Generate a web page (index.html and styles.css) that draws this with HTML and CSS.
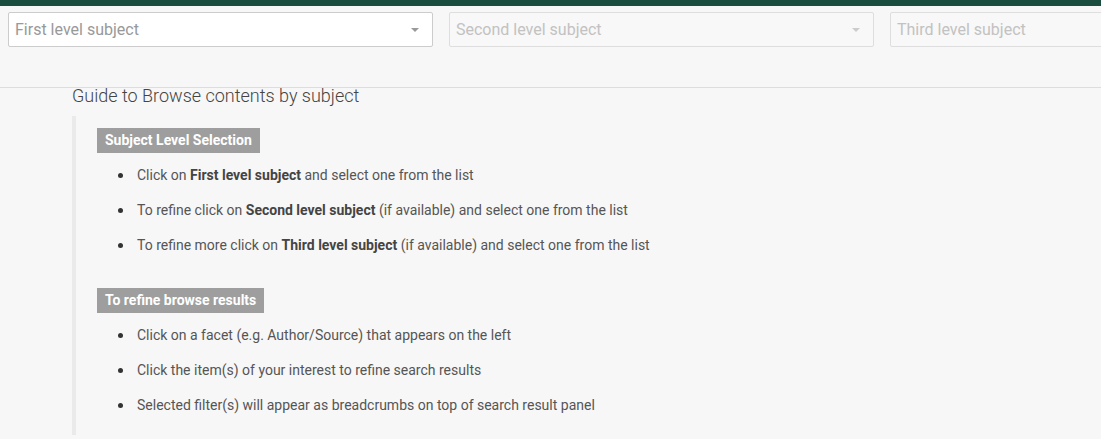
FILE: index.html
```html
<!DOCTYPE html>
<html lang="en">
<head>
  <meta charset="UTF-8" />
  <meta name="viewport" content="width=device-width, initial-scale=1.0"/>
  <title>Browse by Subject</title>
  <link rel="stylesheet" href="styles.css">
</head>
<body>
  <div class="topbar"></div>

  <div class="filters">
    <div class="select">
      <span>First level subject</span>
      <i class="caret"></i>
    </div>
    <div class="select disabled">
      <span>Second level subject</span>
      <i class="caret"></i>
    </div>
    <div class="select disabled">
      <span>Third level subject</span>
      <i class="caret"></i>
    </div>
  </div>

  <div class="content">
    <h2>Guide to Browse contents by subject</h2>

    <div class="guide">
      <span class="label">Subject Level Selection</span>
      <ul>
        <li>Click on <b>First level subject</b> and select one from the list</li>
        <li>To refine click on <b>Second level subject</b> (if available) and select one from the list</li>
        <li>To refine more click on <b>Third level subject</b> (if available) and select one from the list</li>
      </ul>

      <span class="label second">To refine browse results</span>
      <ul>
        <li>Click on a facet (e.g. Author/Source) that appears on the left</li>
        <li>Click the item(s) of your interest to refine search results</li>
        <li>Selected filter(s) will appear as breadcrumbs on top of search result panel</li>
      </ul>
    </div>
  </div>
</body>
</html>
```

FILE: styles.css
```css
* {
  box-sizing: border-box;
  margin: 0;
  padding: 0;
  font-family: Roboto, 'Liberation Sans', sans-serif;
}

body {
  background-color: #f7f7f7;
  color: #555;
  overflow: hidden;
}

.topbar {
  height: 6px;
  background-color: #1b4d3e;
}

.filters {
  display: flex;
  gap: 16px;
  padding: 6px 8px 0;
  height: 82px;
  border-bottom: 1px solid #ddd;
  overflow: hidden;
}

.select {
  flex: 0 0 425px;
  height: 35px;
  display: flex;
  align-items: center;
  justify-content: space-between;
  padding: 0 13px 0 6px;
  background: #fff;
  border: 1px solid #ccc;
  border-radius: 2px;
  font-size: 16px;
  color: #999;
}

.select.disabled {
  background: #f8f8f8;
  border-color: #dedede;
  color: #c2c2c2;
}

.caret {
  width: 0;
  height: 0;
  border-left: 4px solid transparent;
  border-right: 4px solid transparent;
  border-top: 4px solid #999;
}

.select.disabled .caret {
  border-top-color: #ccc;
}

.content {
  padding: 0 0 0 72px;
}

h2 {
  font-size: 18px;
  font-weight: 300;
  color: #444;
  line-height: 16px;
  margin-bottom: 12px;
}

.guide {
  border-left: 4px solid #eaeaea;
  padding: 12px 0 20px 21px;
}

.label {
  display: inline-block;
  background-color: #9e9e9e;
  color: #fff;
  font-size: 14px;
  font-weight: 700;
  line-height: 17px;
  padding: 4px 8px;
}

.label.second {
  margin-top: 33px;
}

ul {
  list-style: none;
  padding-left: 40px;
  margin-top: 12px;
}

li {
  font-size: 14px;
  line-height: 20px;
  color: #555;
}

li::before {
  content: '';
  display: inline-block;
  width: 5px;
  height: 5px;
  border-radius: 50%;
  background: #333;
  margin: 0 14px 0 -19px;
  vertical-align: 2px;
}

li + li {
  margin-top: 15px;
}

li b {
  color: #444;
}
```
